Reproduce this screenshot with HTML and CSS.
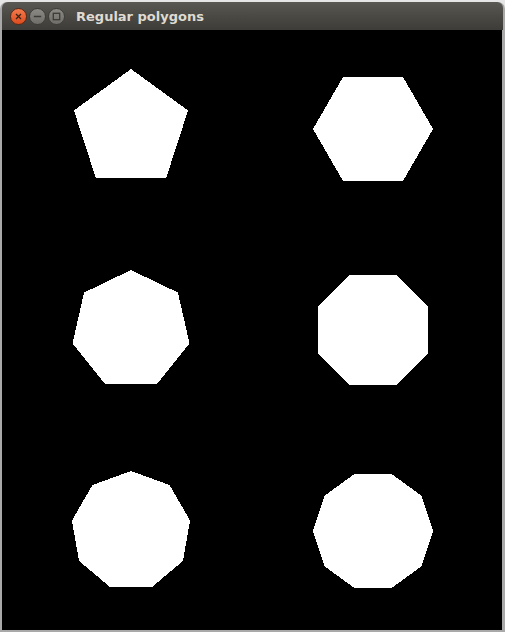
FILE: index.html
```html
<!DOCTYPE html>
<html>
<head>
<meta charset="utf-8">
<title>Regular polygons</title>
<link rel="stylesheet" href="styles.css">
</head>
<body>
<div class="window">
  <div class="titlebar">
    <div class="controls">
      <span class="btn close"><svg width="15" height="15" viewBox="0 0 15 15"><path d="M5 5 L10 10 M10 5 L5 10" stroke="#3b2418" stroke-width="1.3" fill="none"/></svg></span>
      <span class="btn"><svg width="15" height="15" viewBox="0 0 15 15"><path d="M3.8 7.5 H11.2" stroke="#3c3b37" stroke-width="1.5" fill="none"/></svg></span>
      <span class="btn"><svg width="15" height="15" viewBox="0 0 15 15"><rect x="4.3" y="4.3" width="6.4" height="6.4" stroke="#3c3b37" stroke-width="1.3" fill="none"/></svg></span>
    </div>
    <span class="title">Regular polygons</span>
  </div>
  <svg class="canvas" width="500" height="600" viewBox="0 0 500 600" shape-rendering="crispEdges">
    <rect width="500" height="600" fill="#000"/>
    <polygon fill="#fff" points="129,39 186.07,80.46 164.27,147.54 93.73,147.54 71.93,80.46"/>
    <polygon fill="#fff" points="431,99 401,150.96 341,150.96 311,99 341,47.04 401,47.04"/>
    <polygon fill="#fff" points="129,240 175.91,262.59 187.5,313.35 155.03,354.06 102.97,354.06 70.5,313.35 82.09,262.59"/>
    <polygon fill="#fff" points="426.43,322.96 393.96,355.43 348.04,355.43 315.57,322.96 315.57,277.04 348.04,244.57 393.96,244.57 426.43,277.04"/>
    <polygon fill="#fff" points="129,441 167.57,455.04 188.09,490.58 180.96,531 149.52,557.38 108.48,557.38 77.04,531 69.91,490.58 90.43,455.04"/>
    <polygon fill="#fff" points="431,501 419.54,536.27 389.54,558.06 352.46,558.06 322.46,536.27 311,501 322.46,465.73 352.46,443.94 389.54,443.94 419.54,465.73"/>
  </svg>
</div>
</body>
</html>
```

FILE: styles.css
```css
html, body {
  margin: 0;
  padding: 0;
}
body {
  width: 505px;
  height: 632px;
  background: #e6e6e6;
  overflow: hidden;
}
.window {
  margin: 2px 0 0 0;
  width: 505px;
  height: 630px;
  background: #a9a9a9;
  display: flex;
  flex-direction: column;
  border-radius: 7px 7px 0 0;
}
.titlebar {
  height: 28px;
  margin-left: 2px;
  margin-right: 2px;
  border-radius: 6px 6px 0 0;
  background: linear-gradient(#5a5852, #4a4944 50%, #3d3c38);
  display: flex;
  align-items: center;
  box-sizing: border-box;
  padding-left: 8px;
}
.controls {
  display: flex;
  gap: 2px;
}
.btn {
  box-sizing: border-box;
  width: 17px;
  height: 17px;
  border-radius: 50%;
  border: 1px solid #3e3d39;
  background: linear-gradient(#8a8984, #6f6e69);
  display: flex;
}
.btn.close {
  border-color: #5a2a16;
  background: linear-gradient(#f47a4c, #dc4b1e);
}
.title {
  margin-left: 11px;
  font-family: "DejaVu Sans", sans-serif;
  font-weight: bold;
  font-size: 13px;
  color: #dfdbd2;
  margin-top: 1px;
}
.canvas {
  display: block;
  margin-left: 2px;
}
```
